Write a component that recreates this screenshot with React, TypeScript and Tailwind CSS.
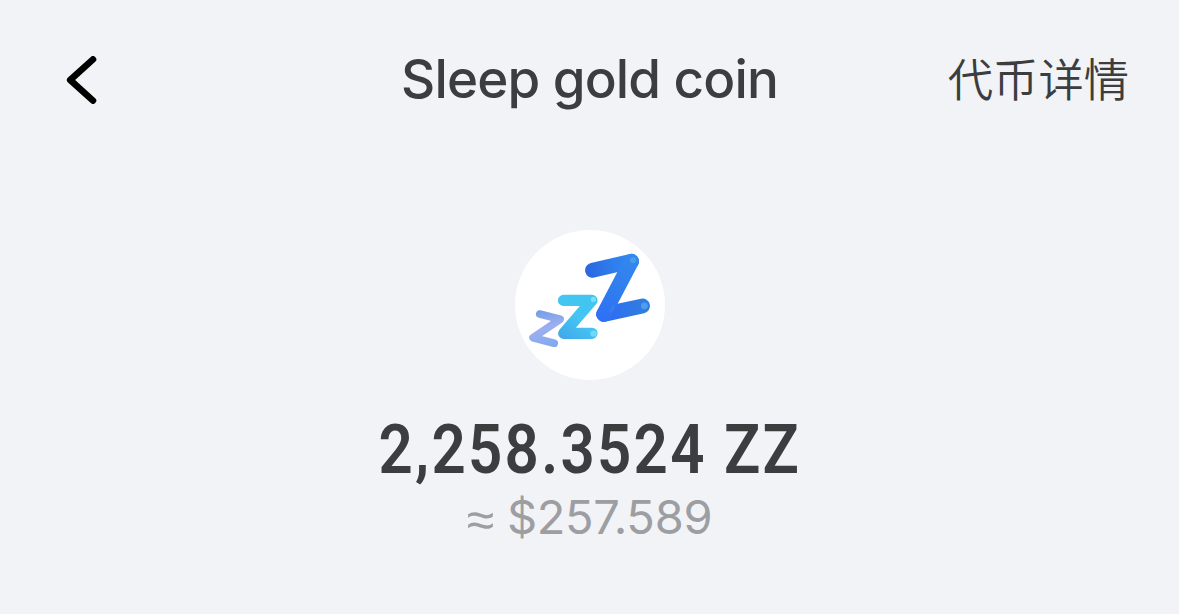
function BackIcon() {
  return (
    <svg className="h-12 w-8" viewBox="0 0 32 48" fill="none">
      <path d="M27 3.4 4.2 24 27 44.6" stroke="#000" strokeWidth="6.6" strokeLinecap="round" strokeLinejoin="round" />
    </svg>
  );
}

function SleepCoin() {
  return (
    <svg className="size-[150px]" viewBox="0 0 150 150" fill="none" strokeLinecap="round" strokeLinejoin="round">
      <defs>
        <linearGradient id="large" x1="118" y1="25" x2="84" y2="90" gradientUnits="userSpaceOnUse">
          <stop stopColor="#3389ec" />
          <stop offset="0.5" stopColor="#307eee" />
          <stop offset="1" stopColor="#2f6ff6" />
        </linearGradient>
        <linearGradient id="largeBar" x1="70" y1="40" x2="118" y2="30" gradientUnits="userSpaceOnUse">
          <stop stopColor="#2b66df" />
          <stop offset="0.6" stopColor="#2f7eed" />
          <stop offset="1" stopColor="#3289ec" />
        </linearGradient>
        <linearGradient id="largeFoot" x1="88" y1="84" x2="128" y2="76" gradientUnits="userSpaceOnUse">
          <stop stopColor="#2e6bf5" />
          <stop offset="1" stopColor="#2f7de0" />
        </linearGradient>
        <linearGradient id="medium" x1="78" y1="66" x2="48" y2="108" gradientUnits="userSpaceOnUse">
          <stop stopColor="#41c5f0" />
          <stop offset="0.5" stopColor="#45c5f3" />
          <stop offset="1" stopColor="#42a9eb" />
        </linearGradient>
        <linearGradient id="small" x1="24" y1="82" x2="34" y2="116" gradientUnits="userSpaceOnUse">
          <stop stopColor="#799fe7" />
          <stop offset="0.5" stopColor="#9caff0" />
          <stop offset="1" stopColor="#84a8ee" />
        </linearGradient>
      </defs>
      <circle cx="75" cy="75" r="75" fill="#fff" />
      <path d="M24.7 84 45.2 89.3 18 107.7 39.2 113.2" stroke="url(#small)" strokeWidth="7.6" />
      <path d="M48.5 70.4H77L48.7 103.3H77" stroke="url(#medium)" strokeWidth="11.2" />
      <path d="M49 102.5 74 74" stroke="#37b9ed" strokeWidth="0.7" opacity="0.5" />
      <circle cx="78.4" cy="69.4" r="2.6" fill="#7eddf8" />
      <circle cx="78.6" cy="103.6" r="3.2" fill="#70d8f7" />
      <path d="M88.7 84.3 127.5 76" stroke="url(#largeFoot)" strokeWidth="15" />
      <path d="M77.6 40.3 116.5 31.3" stroke="url(#largeBar)" strokeWidth="15" />
      <path d="M116.5 31.3 88.7 84.3" stroke="url(#large)" strokeWidth="15" />
      <path d="M95 81.5Q98 80 98.5 76" stroke="#4b91f5" strokeWidth="0.8" />
      <circle cx="118" cy="30.2" r="3" fill="#4a9cf0" />
      <circle cx="129.4" cy="75.8" r="3.4" fill="#4e9def" />
    </svg>
  );
}

export default function App() {
  return (
    <main className="h-[614px] w-[1179px] overflow-hidden bg-[#f1f3f7] font-['Inter','Noto_Sans_CJK_SC',sans-serif] text-[#3c3d3f]">
      <header className="grid h-40 grid-cols-[1fr_auto_1fr] items-center pr-[50px] pl-[66px]">
        <button aria-label="Back" className="justify-self-start">
          <BackIcon />
        </button>
        <h1 className="mr-[16px] mb-0.5 text-[53px] leading-[64px] font-medium tracking-[-0.85px] whitespace-nowrap">Sleep gold coin</h1>
        <button className="mt-0.5 justify-self-end text-[45.3px] leading-[64px] font-[350] whitespace-nowrap">代币详情</button>
      </header>
      <section className="flex flex-col items-center pt-[70px]">
        <SleepCoin />
        <p className="mt-[30px] ml-px scale-x-[0.87] font-['Roboto',sans-serif] text-[69px] leading-[80px] font-semibold tracking-[2.6px] whitespace-nowrap">
          2,258.3524 ZZ
        </p>
        <p className="-mt-px flex h-14 gap-[13px] text-[47px] leading-[56px] tracking-[-0.3px] whitespace-nowrap text-[#9d9ea2]">
          <span className="pt-1.5 font-['Liberation_Sans',sans-serif] text-[50px] leading-[50px]">≈</span>
          <span>$257.589</span>
        </p>
      </section>
    </main>
  );
}
